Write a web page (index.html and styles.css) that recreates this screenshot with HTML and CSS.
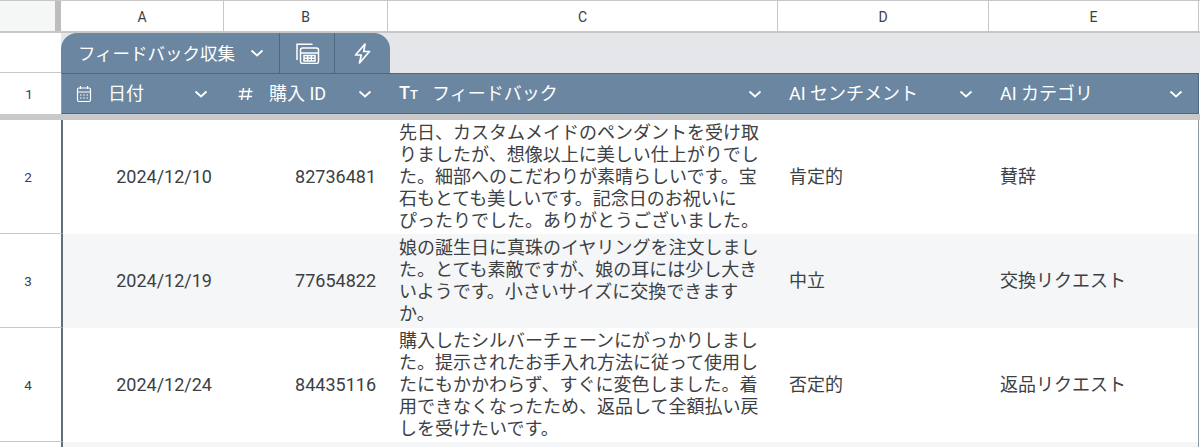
FILE: index.html
```html
<!DOCTYPE html>
<html lang="ja">
<head>
<meta charset="utf-8">
<title>フィードバック収集</title>
<link rel="stylesheet" href="styles.css">
</head>
<body>
<div class="sheet">
  <div class="row col-heads">
    <div class="corner"></div>
    <div class="freeze"></div>
    <div class="col-a head-cell">A</div>
    <div class="col-b head-cell">B</div>
    <div class="col-c head-cell">C</div>
    <div class="col-d head-cell">D</div>
    <div class="col-e head-cell">E</div>
  </div>
  <div class="row tab-row">
    <div class="gutter tab-gutter"></div>
    <div class="tabs-area">
      <div class="tabs">
        <div class="tab tab-name"><span class="tab-label">フィードバック収集</span>
          <svg class="chev" viewBox="0 0 14 8"><path d="M1.500 1.500 7 6.500l5.500-5"/></svg>
        </div>
        <div class="tab tab-icon">
          <svg class="ico-calc" viewBox="0 0 24 21"><path d="M1 17V1.200h15.500M6.500 5h14a2 2 0 0 1 2 2v11.500a2 2 0 0 1-2 2h-14a2 2 0 0 1-2-2V7a2 2 0 0 1 2-2zM4.500 10h18M8 12.500h11v5.500H8zM8 15.250h11M11.670 12.500v5.500M15.330 12.500v5.500"/></svg>
        </div>
        <div class="tab tab-icon tab-last">
          <svg class="ico-bolt" viewBox="0 0 17 21"><path d="M11 1 1.500 12h5.800L5.500 20 15.500 8.500H9.700z"/></svg>
        </div>
      </div>
    </div>
  </div>
  <div class="row title-row">
    <div class="gutter num">1</div>
    <div class="titles">
      <div class="col-a title">
        <svg class="ico-date" viewBox="0 0 16 18"><path d="M1.500 4.500a1.500 1.500 0 0 1 1.500-1.500h10a1.500 1.500 0 0 1 1.500 1.500v10.500a1.500 1.500 0 0 1-1.500 1.500H3a1.500 1.500 0 0 1-1.500-1.500zM1.500 7h13M4.500 1v3M11.500 1v3M4 10h1.500M7.250 10h1.500M10.500 10h1.500M4 13h1.500M7.250 13h1.500M10.500 13h1.500"/></svg>
        <span class="title-text date-text">日付</span>
        <svg class="chev" viewBox="0 0 14 8"><path d="M1.500 1.500 7 6.500l5.500-5"/></svg>
      </div>
      <div class="col-b title">
        <svg class="ico-hash" viewBox="0 0 15 14"><path d="M5.500 1 3.500 13M11.500 1 9.500 13M1 4.500h13.500M.5 9.500h13.500"/></svg>
        <span class="title-text id-text">購入 ID</span>
        <svg class="chev" viewBox="0 0 14 8"><path d="M1.500 1.500 7 6.500l5.500-5"/></svg>
      </div>
      <div class="col-c title">
        <span class="ico-tt">T<small>T</small></span>
        <span class="title-text fb-text">フィードバック</span>
        <svg class="chev" viewBox="0 0 14 8"><path d="M1.500 1.500 7 6.500l5.500-5"/></svg>
      </div>
      <div class="col-d title">
        <span class="title-text">AI センチメント</span>
        <svg class="chev" viewBox="0 0 14 8"><path d="M1.500 1.500 7 6.500l5.500-5"/></svg>
      </div>
      <div class="col-e title">
        <span class="title-text">AI カテゴリ</span>
        <svg class="chev" viewBox="0 0 14 8"><path d="M1.500 1.500 7 6.500l5.500-5"/></svg>
      </div>
    </div>
  </div>
  <div class="freeze-h"></div>
  <div class="row data data-2">
    <div class="gutter num">2</div>
    <div class="cells">
      <div class="col-a cell right">2024/12/10</div>
      <div class="col-b cell right">82736481</div>
      <div class="col-c cell text">先日、カスタムメイドのペンダントを受け取<br>りましたが、想像以上に美しい仕上がりでし<br>た。細部へのこだわりが素晴らしいです。宝<br>石もとても美しいです。記念日のお祝いに<br>ぴったりでした。ありがとうございました。</div>
      <div class="col-d cell">肯定的</div>
      <div class="col-e cell">賛辞</div>
    </div>
  </div>
  <div class="row data data-3">
    <div class="gutter num">3</div>
    <div class="cells alt">
      <div class="col-a cell right">2024/12/19</div>
      <div class="col-b cell right">77654822</div>
      <div class="col-c cell text">娘の誕生日に真珠のイヤリングを注文しまし<br>た。とても素敵ですが、娘の耳には少し大き<br>いようです。小さいサイズに交換できます<br>か。</div>
      <div class="col-d cell">中立</div>
      <div class="col-e cell">交換リクエスト</div>
    </div>
  </div>
  <div class="row data data-4">
    <div class="gutter num">4</div>
    <div class="cells">
      <div class="col-a cell right">2024/12/24</div>
      <div class="col-b cell right">84435116</div>
      <div class="col-c cell text">購入したシルバーチェーンにがっかりしまし<br>た。提示されたお手入れ方法に従って使用し<br>たにもかかわらず、すぐに変色しました。着<br>用できなくなったため、返品して全額払い戻<br>しを受けたいです。</div>
      <div class="col-d cell">否定的</div>
      <div class="col-e cell">返品リクエスト</div>
    </div>
  </div>
  <div class="row data data-5">
    <div class="gutter"></div>
    <div class="cells alt"></div>
  </div>
</div>
</body>
</html>
```
FILE: styles.css
```css
* { box-sizing: border-box; }
html, body { margin: 0; padding: 0; background: #fff; overflow: hidden; }
body { font-family: Roboto, "Noto Sans CJK JP", sans-serif; color: #3c4043; }
.sheet { width: 1200px; height: 447px; display: flex; flex-direction: column; overflow: hidden; }
.row { display: flex; padding-right: 1px; flex: none; }
.col-a { width: 163px; }
.col-b { width: 164px; }
.col-c { width: 390px; }
.col-d { width: 211px; }
.col-e { width: 210px; }

.col-heads { height: 33px; border-top: 1px solid #c7c7c7; border-bottom: 2px solid #c7c7c7; padding-right: 0; }
.corner { width: 55px; background: #f5f6f6; }
.freeze { width: 6px; background: #bdbdbd; }
.head-cell { display: flex; align-items: center; justify-content: center; border-right: 1px solid #c7c7c7; font-size: 14px; color: #3c4043; padding-top: 1px; }

.gutter { width: 61px; flex: none; display: flex; align-items: center; justify-content: center; }
.num { font-size: 13.500px; color: #3c4043; padding-right: 3px; }
.tab-row { height: 40px; padding-right: 0; }
.tab-gutter { border-bottom: 1px solid #c7c7c7; }
.tabs-area { flex: 1; background: #e4e6ea; display: flex; align-items: flex-end; }
.tabs { height: 40px; display: flex; background: #6b86a0; border-radius: 16px 16px 0 0; color: #fff; }
.tab { display: flex; align-items: center; justify-content: center; border-right: 1px solid #4f6880; }
.tab-name { width: 219px; gap: 15px; padding-left: 2px; font-size: 17.500px; }
.tab-label { padding-bottom: 2px; }
.tab-icon { width: 55px; }
.tab-last { border-right: 0; }

.chev { width: 14px; height: 8px; flex: none; fill: none; stroke: #fff; stroke-width: 1.800; }
.ico-calc { width: 24px; height: 21px; fill: none; stroke: #fff; stroke-width: 1.500; margin-left: 2px; }
.ico-bolt { width: 17px; height: 21px; fill: none; stroke: #fff; stroke-width: 1.700; stroke-linejoin: round; }
.ico-date { width: 16px; height: 18px; flex: none; margin-left: 3px; fill: none; stroke: #fff; stroke-width: 1.200; }
.ico-hash { width: 15px; height: 14px; flex: none; margin-left: 3px; fill: none; stroke: #fff; stroke-width: 1.500; }

.title-row { height: 41px; }
.titles { flex: 1; display: flex; background: #6b86a0; color: #fff; border: 1px solid #4f6880; border-left-color: #8b9cad; }
.title { display: flex; align-items: center; padding: 0 16px 0 11px; font-size: 18px; }
.titles .col-a { width: 162px; }
.titles .col-e { width: 208px; padding-right: 14px; }
.title .chev { margin-left: auto; }
.title-text { padding-bottom: 3px; }
.date-text { margin-left: 16px; }
.id-text { margin-left: 16px; }
.fb-text { margin-left: 13px; }
.ico-tt { font-size: 18px; font-weight: 500; width: 20px; padding-bottom: 2px; }
.ico-tt small { font-size: 13px; }

.freeze-h { height: 6px; flex: none; background: #c9c9c9; }
.data-2 { height: 114px; }
.data-3 { height: 94px; }
.data-4 { height: 114px; }
.data-5 { flex: 1; }
.data .gutter { width: 63px; border-right: 2px solid #5f6f7d; border-bottom: 1px solid #c7c7c7; padding-right: 5px; }
.data-5 .gutter { border-bottom: 0; }
.cells { flex: 1; display: flex; border-right: 1px solid #8e99a3; }
.cells .col-a { width: 161px; }
.cells .col-e { width: 209px; }
.alt { background: #f4f6f7; }
.cell { display: flex; align-items: center; padding: 0 12px 0 11px; font-size: 18px; line-height: 22px; color: #3c4043; }
.right { justify-content: flex-end; }
.text { display: block; align-self: center; white-space: nowrap; }
```
